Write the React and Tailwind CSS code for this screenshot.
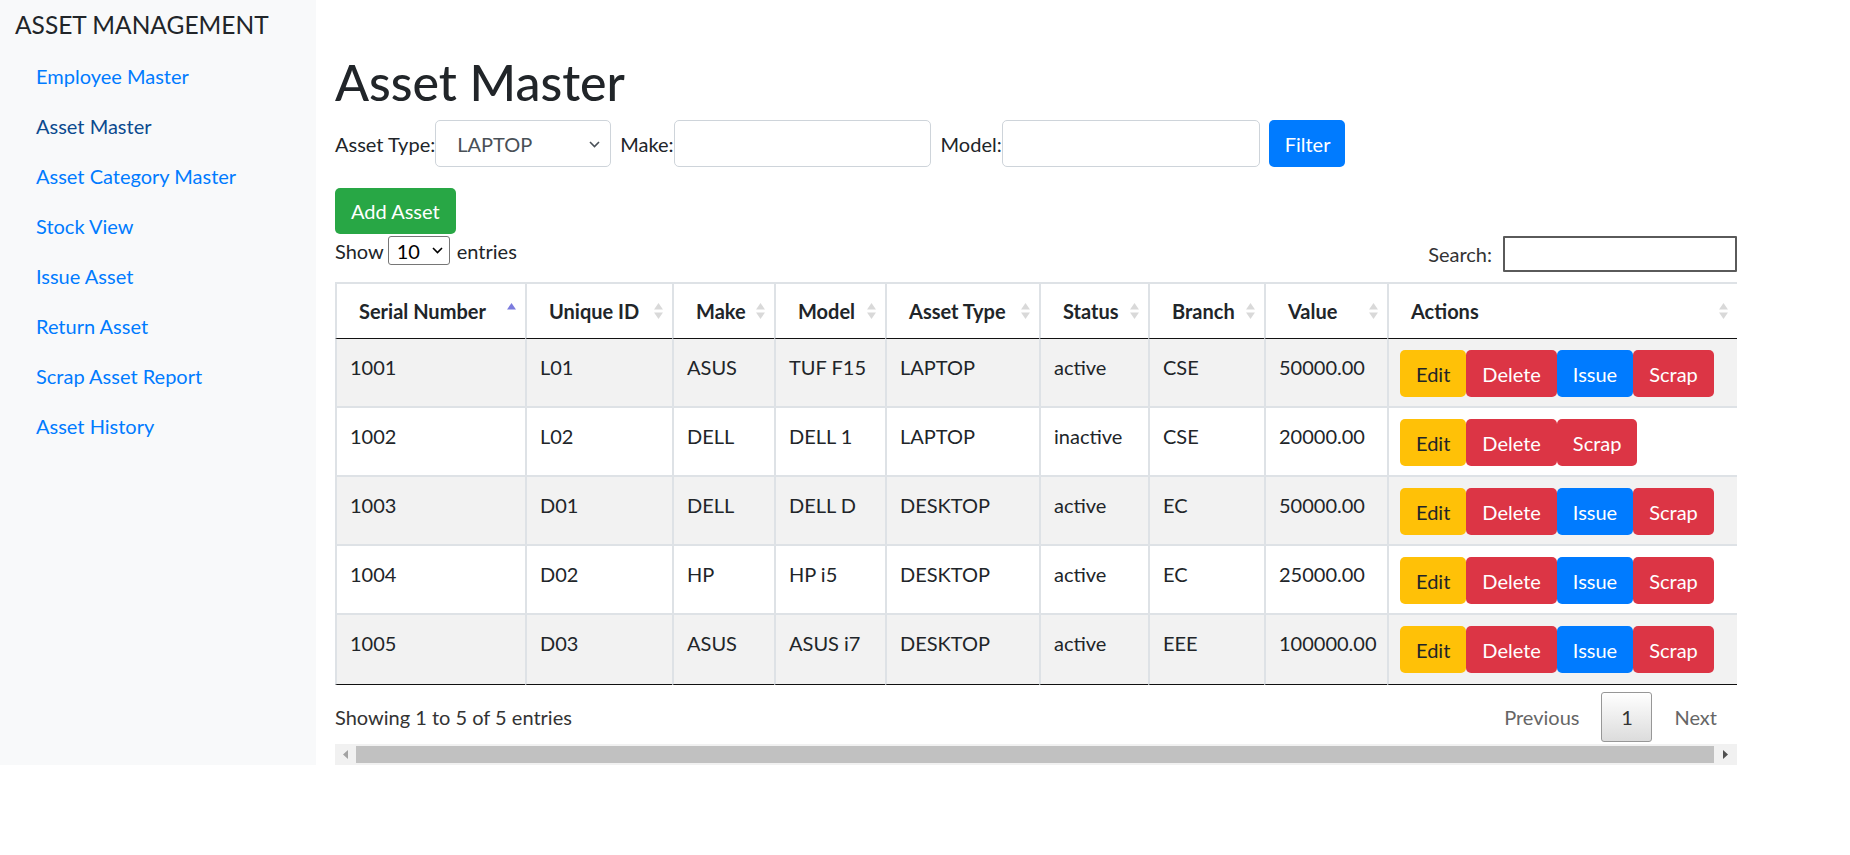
import React from 'react';

const navItems = [
    'Employee Master',
    'Asset Master',
    'Asset Category Master',
    'Stock View',
    'Issue Asset',
    'Return Asset',
    'Scrap Asset Report',
    'Asset History',
];

const columns = [
    { label: 'Serial Number', w: 'w-[190px]', sorted: true },
    { label: 'Unique ID', w: 'w-[147px]' },
    { label: 'Make', w: 'w-[102px]' },
    { label: 'Model', w: 'w-[111px]' },
    { label: 'Asset Type', w: 'w-[154px]' },
    { label: 'Status', w: 'w-[109px]' },
    { label: 'Branch', w: 'w-[116px]' },
    { label: 'Value', w: 'w-[123px]' },
    { label: 'Actions', w: 'w-[350px]' },
];

const assets = [
    { serial: '1001', uid: 'L01', make: 'ASUS', model: 'TUF F15', type: 'LAPTOP', status: 'active', branch: 'CSE', value: '50000.00' },
    { serial: '1002', uid: 'L02', make: 'DELL', model: 'DELL 1', type: 'LAPTOP', status: 'inactive', branch: 'CSE', value: '20000.00' },
    { serial: '1003', uid: 'D01', make: 'DELL', model: 'DELL D', type: 'DESKTOP', status: 'active', branch: 'EC', value: '50000.00' },
    { serial: '1004', uid: 'D02', make: 'HP', model: 'HP i5', type: 'DESKTOP', status: 'active', branch: 'EC', value: '25000.00' },
    { serial: '1005', uid: 'D03', make: 'ASUS', model: 'ASUS i7', type: 'DESKTOP', status: 'active', branch: 'EEE', value: '100000.00' },
];

function SortIcon({ sorted }) {
    return (
        <svg width="9" height="17" viewBox="0 0 9 17" className="shrink-0">
            {sorted ? (
                <polygon points="4.5,0 9,6.5 0,6.5" fill="#7b7bde" />
            ) : (
                <>
                    <polygon points="4.5,0 9,6.5 0,6.5" fill="#d9d9d9" />
                    <polygon points="0,9.5 9,9.5 4.5,16" fill="#d9d9d9" />
                </>
            )}
        </svg>
    );
}

function Chevron({ className }) {
    return (
        <svg width="11" height="7" viewBox="0 0 11 7" className={className}>
            <path d="M1 1 L5.5 5.5 L10 1" fill="none" stroke="currentColor" strokeWidth="1.6" />
        </svg>
    );
}

export default function App() {
    const btn = 'h-[47px] px-[16px] rounded-[5px] text-[20px] leading-[30px]';

    return (
        <div className="flex font-['Lato',sans-serif] text-[#212529] bg-white">
            {/* Sidebar */}
            <aside className="w-[316px] shrink-0 bg-[#f8f9fa] px-[15px] pt-[10px]">
                <h5 className="text-[24.5px] leading-[30px] mb-[11px]">ASSET MANAGEMENT</h5>
                <ul>
                    {navItems.map(item => (
                        <li key={item}>
                            <a
                                href="#"
                                className={`block px-[21px] py-[10px] text-[20px] leading-[30px] ${item === 'Asset Master' ? 'text-[#0b4a8f]' : 'text-[#007bff]'}`}
                            >
                                {item}
                            </a>
                        </li>
                    ))}
                </ul>
            </aside>

            {/* Main */}
            <main className="ml-[19px] w-[1402px] pt-[52px] text-[20px] leading-[30px]">
                <h1 className="text-[50px] leading-[60px] font-medium">Asset Master</h1>

                {/* Filter form */}
                <div className="flex items-center h-[47px] mt-[8px]">
                    <label>Asset Type:</label>
                    <div className="relative w-[176px] h-[47px] border border-[#ced4da] rounded-[5px] flex items-center pl-[21px] text-[#495057]">
                        LAPTOP
                        <Chevron className="absolute right-[10px] top-[20px] text-[#495057]" />
                    </div>
                    <label className="ml-[9px]">Make:</label>
                    <input className="w-[257px] h-[47px] border border-[#ced4da] rounded-[5px] px-[15px]" />
                    <label className="ml-[10px]">Model:</label>
                    <input className="w-[258px] h-[47px] border border-[#ced4da] rounded-[5px] px-[15px]" />
                    <button className={`${btn} ml-[9px] bg-[#007bff] text-white w-[76px]`}>Filter</button>
                </div>

                <button className="mt-[21px] h-[46px] px-[16px] rounded-[5px] bg-[#28a745] text-white">Add Asset</button>

                {/* Show / Search */}
                <div className="flex justify-between items-start mt-[2px]">
                    <div className="flex items-center h-[29px]">
                        <span>Show</span>
                        <div className="relative ml-[4px] w-[62px] h-[29px] border border-[#767676] rounded-[3px] flex items-center pl-[8px] text-black">
                            10
                            <Chevron className="absolute right-[6px] top-[10px] text-black" />
                        </div>
                        <span className="ml-[7px]">entries</span>
                    </div>
                    <div className="flex items-center h-[36px]">
                        <span className="text-[#333]">Search:</span>
                        <input className="ml-[11px] w-[234px] h-[36px] border-2 border-[#5a5a5a] rounded-[1px]" />
                    </div>
                </div>

                {/* Table */}
                <table className="mt-[10px] table-fixed border-separate border-spacing-0 w-[1402px]">
                    <thead>
                        <tr>
                            {columns.map(col => (
                                <th
                                    key={col.label}
                                    className={`${col.w} text-left font-bold border-t-2 border-l-2 border-[#dee2e6] border-b border-b-[#111] pl-[22px] pr-[9px] pt-[12px] pb-[12px]`}
                                >
                                    <div className="flex items-center justify-between">
                                        <span>{col.label}</span>
                                        <SortIcon sorted={col.sorted} />
                                    </div>
                                </th>
                            ))}
                        </tr>
                    </thead>
                    <tbody>
                        {assets.map((a, i) => {
                            const last = i === assets.length - 1;
                            const cell = `align-top border-l-2 border-[#dee2e6] ${last ? 'border-b border-b-[#111] pb-[11px]' : 'border-b-2 pb-[9px]'}`;
                            const td = `${cell} pl-[13px] pt-[13px]`;
                            return (
                                <tr key={a.serial} className={i % 2 === 0 ? 'bg-[#f2f2f2]' : 'bg-white'}>
                                    <td className={td}>{a.serial}</td>
                                    <td className={td}>{a.uid}</td>
                                    <td className={td}>{a.make}</td>
                                    <td className={td}>{a.model}</td>
                                    <td className={td}>{a.type}</td>
                                    <td className={td}>{a.status}</td>
                                    <td className={td}>{a.branch}</td>
                                    <td className={td}>{a.value}</td>
                                    <td className={`${cell} pl-[11px] pt-[11px]`}>
                                        <div className="flex">
                                            <button className={`${btn} bg-[#ffc107] text-[#212529]`}>Edit</button>
                                            <button className={`${btn} bg-[#dc3545] text-white`}>Delete</button>
                                            {a.status === 'active' && (
                                                <button className={`${btn} bg-[#007bff] text-white`}>Issue</button>
                                            )}
                                            <button className={`${btn} bg-[#dc3545] text-white`}>Scrap</button>
                                        </div>
                                    </td>
                                </tr>
                            );
                        })}
                    </tbody>
                </table>

                {/* Footer */}
                <div className="flex justify-between items-center pt-[7px] pb-[2px]">
                    <span className="text-[#333]">Showing 1 to 5 of 5 entries</span>
                    <div className="flex items-center">
                        <span className="px-[20px] py-[10px] text-[#666]">Previous</span>
                        <span className="ml-[2px] w-[51px] h-[50px] flex items-center justify-center border border-[#979797] rounded-[3px] bg-gradient-to-b from-white to-[#dcdcdc] text-[#333]">1</span>
                        <span className="ml-[2px] px-[20px] py-[10px] text-[#666]">Next</span>
                    </div>
                </div>

                {/* Horizontal scrollbar */}
                <div className="flex items-center h-[21px] bg-[#f1f1f1]">
                    <div className="w-[21px] flex justify-center">
                        <svg width="5" height="9" viewBox="0 0 5 9"><polygon points="5,0 5,9 0,4.5" fill="#a3a3a3" /></svg>
                    </div>
                    <div className="flex-1 h-[17px] bg-[#c1c1c1]" />
                    <div className="w-[23px] flex justify-center">
                        <svg width="5" height="9" viewBox="0 0 5 9"><polygon points="0,0 0,9 5,4.5" fill="#505050" /></svg>
                    </div>
                </div>
            </main>
        </div>
    );
}
